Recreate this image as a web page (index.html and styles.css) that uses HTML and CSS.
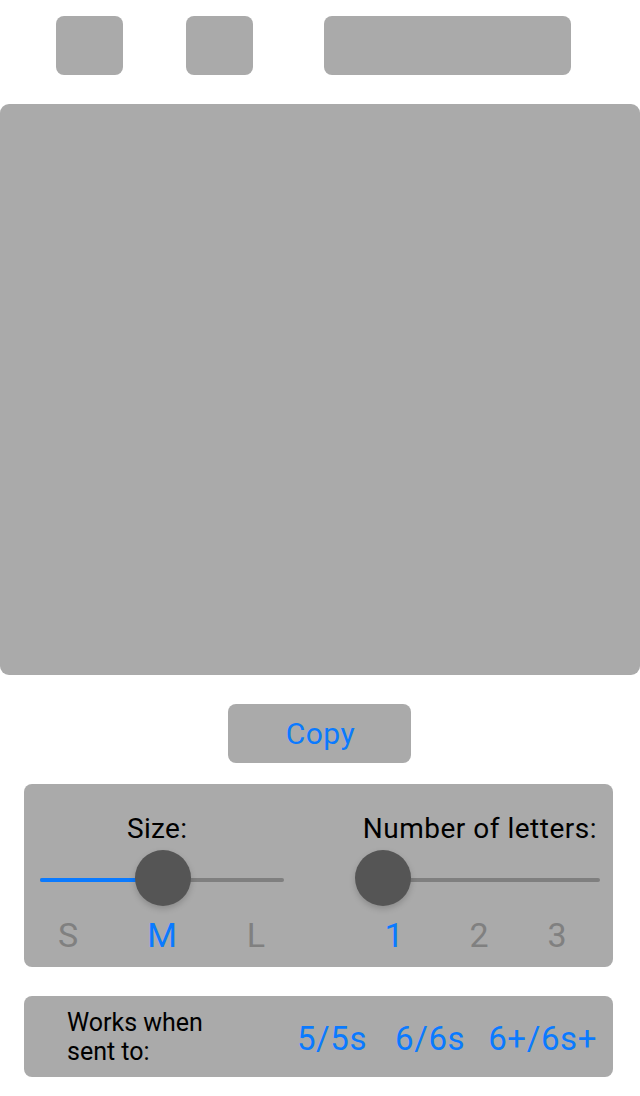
FILE: index.html
```html
<!DOCTYPE html>
<html>
<head>
<meta charset="utf-8">
<link rel="stylesheet" href="styles.css">
</head>
<body>
<div class="toolbar">
  <div class="tool tool-a"></div>
  <div class="tool tool-b"></div>
  <div class="tool tool-wide"></div>
</div>
<div class="canvas"></div>
<div class="copy-row"><button class="copy-btn">Copy</button></div>
<div class="settings">
  <div class="col">
    <div class="title title-size">Size:</div>
    <div class="slider">
      <div class="track"><div class="fill fill-half"></div></div>
      <div class="knob knob-mid"></div>
    </div>
    <div class="labels labels-size">
      <span class="lab">S</span>
      <span class="lab active">M</span>
      <span class="lab">L</span>
    </div>
  </div>
  <div class="col">
    <div class="title title-count">Number of letters:</div>
    <div class="slider">
      <div class="track"></div>
      <div class="knob knob-start"></div>
    </div>
    <div class="labels labels-count">
      <span class="lab active l1">1</span>
      <span class="lab l2">2</span>
      <span class="lab l3">3</span>
    </div>
  </div>
</div>
<div class="works">
  <div class="works-text">Works when<br>sent to:</div>
  <div class="devices">
    <span class="dev">5/5s</span>
    <span class="dev d2">6/6s</span>
    <span class="dev d3">6+/6s+</span>
  </div>
</div>
</body>
</html>
```
FILE: styles.css
```css
* { box-sizing: border-box; }
html, body { margin: 0; padding: 0; background: #ffffff; }
body {
  width: 640px;
  height: 1096px;
  overflow: hidden;
  font-family: Roboto, "Liberation Sans", Arial, sans-serif;
}
.toolbar {
  display: flex;
  padding-top: 16px;
  height: 75px;
}
.tool {
  height: 59px;
  background: #aaaaaa;
  border-radius: 8px;
}
.tool-a { width: 67px; margin-left: 56px; }
.tool-b { width: 67px; margin-left: 63px; }
.tool-wide { width: 247px; margin-left: 71px; }
.canvas {
  margin-top: 29px;
  height: 571px;
  background: #aaaaaa;
  border-radius: 9px;
}
.copy-row {
  display: flex;
  justify-content: center;
  margin-top: 29px;
}
.copy-btn {
  width: 183px;
  height: 59px;
  margin-left: -1px;
  border: none;
  border-radius: 8px;
  background: #aaaaaa;
  color: #0a7aff;
  font-family: Roboto, "Liberation Sans", Arial, sans-serif;
  font-size: 30px;
  letter-spacing: 0.5px;
  padding: 0 0 0 2px;
}
.settings {
  margin: 21px 0 0 24px;
  width: 589px;
  height: 183px;
  background: #aaaaaa;
  border-radius: 8px;
  display: grid;
  grid-template-columns: 244px 244px;
  grid-template-rows: max-content;
  align-content: start;
  column-gap: 72px;
  padding: 29px 13px 0 16px;
}
.title {
  font-size: 28px;
  line-height: 32px;
  letter-spacing: 0.3px;
  color: #000000;
}
.title-size { padding-left: 87px; }
.title-count { text-align: right; padding-right: 3px; white-space: nowrap; letter-spacing: 0.5px; }
.slider {
  position: relative;
  height: 56px;
  margin-top: 5px;
  display: flex;
  align-items: center;
}
.track {
  width: 100%;
  height: 4px;
  margin-top: 4px;
  border-radius: 2px;
  background: #7f7f7f;
  display: flex;
}
.fill {
  height: 4px;
  border-radius: 2px;
  background: #0a7aff;
}
.fill-half { width: 100px; }
.knob {
  position: absolute;
  top: 0;
  width: 56px;
  height: 56px;
  border-radius: 50%;
  background: #555555;
  box-shadow: 0 3px 6px rgba(0, 0, 0, 0.18);
}
.knob-mid { left: 95px; }
.knob-start { left: -1px; }
.labels {
  display: flex;
  margin-top: 11px;
  font-size: 34px;
  line-height: 36px;
}
.lab {
  width: 40px;
  text-align: center;
  color: #808080;
}
.lab.active { color: #0a7aff; }
.labels-size { padding-left: 8px; gap: 54px; }
.labels-count { padding-left: 18px; }
.l2 { margin-left: 45px; }
.l3 { margin-left: 38px; }
.works {
  margin: 29px 0 0 24px;
  width: 589px;
  height: 81px;
  background: #aaaaaa;
  border-radius: 8px;
  display: flex;
  align-items: center;
  padding: 0 16px 0 43px;
}
.works-text {
  font-size: 25px;
  line-height: 29px;
  color: #000000;
}
.devices {
  margin-left: auto;
  display: flex;
  padding-top: 4px;
}
.dev {
  font-size: 33px;
  letter-spacing: 0.6px;
  color: #0a7aff;
}
.d2 { margin-left: 28px; }
.d3 { margin-left: 23px; }
```
